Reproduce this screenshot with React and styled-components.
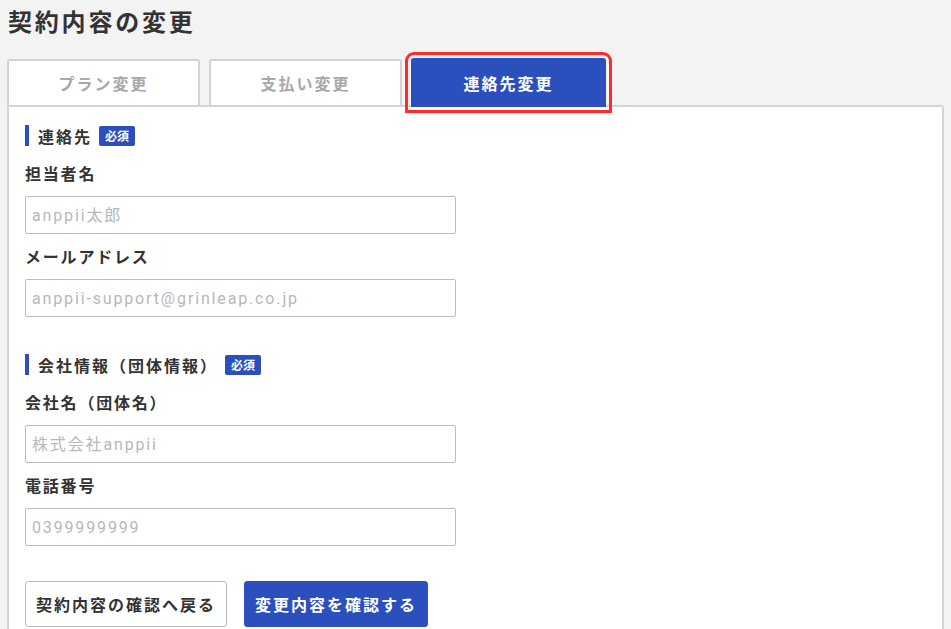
import React from "react";
import styled, { createGlobalStyle } from "styled-components";

const BLUE = "#2b50bd";
const FONT = `"Noto Sans CJK JP", "Noto Sans", sans-serif`;
const INPUT_FONT = `Roboto, "Noto Sans CJK JP", sans-serif`;

const Global = createGlobalStyle`
  html, body { margin: 0; padding: 0; background: #f3f3f3; }
  body { font-family: ${FONT}; color: #333; }
  * { box-sizing: border-box; }
`;

const Page = styled.div`
  padding: 0 7px;
`;

const Title = styled.h1`
  margin: 0;
  padding-left: 1px;
  font-size: 24px;
  line-height: 42px;
  font-weight: 700;
  letter-spacing: 2.8px;
  color: #333;
`;

const Tabs = styled.div`
  display: flex;
  gap: 9px;
  margin-top: 16px;
  align-items: flex-end;
  position: relative;
  z-index: 1;
`;

const Tab = styled.button`
  width: ${(p) => (p.$active ? "195px" : "193px")};
  height: ${(p) => (p.$active ? "49px" : "46px")};
  margin-bottom: ${(p) => (p.$active ? "-2px" : "0")};
  border: ${(p) => (p.$active ? "none" : "2px solid #d2d2d2")};
  border-bottom: none;
  border-radius: 3px 3px 0 0;
  background: ${(p) => (p.$active ? BLUE : "#fff")};
  color: ${(p) => (p.$active ? "#fff" : "#a8a8a8")};
  font-family: ${FONT};
  font-size: 16px;
  font-weight: 700;
  letter-spacing: 2px;
  padding: 0;
  cursor: pointer;
  outline: ${(p) => (p.$highlight ? "3px solid #ff2b2b" : "none")};
  outline-offset: 3px;
`;

const Panel = styled.div`
  background: #fff;
  border: 2px solid #d4d4d4;
  border-radius: 0 3px 0 0;
  padding: 18px 16px 40px;
`;

const Section = styled.section`
  & + & {
    margin-top: 37px;
  }
`;

const SectionHead = styled.div`
  display: flex;
  align-items: center;
  height: 21px;
  border-left: 4px solid ${BLUE};
  padding-left: 9px;
  font-size: 16px;
  font-weight: 700;
  letter-spacing: 2px;
  color: #333;
  margin-bottom: 15px;
`;

const Badge = styled.span`
  display: inline-flex;
  align-items: center;
  justify-content: center;
  width: 36px;
  height: 20px;
  margin-left: 7px;
  background: ${BLUE};
  color: #fff;
  font-size: 12px;
  font-weight: 700;
  letter-spacing: 0;
  border-radius: 2px;
`;

const Field = styled.div`
  & + & {
    margin-top: 10px;
  }
`;

const Label = styled.label`
  display: block;
  font-size: 16px;
  line-height: 24px;
  font-weight: 700;
  letter-spacing: 1.8px;
  color: #333;
  margin-bottom: 11px;
`;

const Input = styled.input`
  display: block;
  width: 431px;
  height: 38px;
  border: 1px solid #bdbdbd;
  border-radius: 2px;
  padding: 0 6px;
  font-family: ${INPUT_FONT};
  font-size: 16px;
  letter-spacing: 1.85px;
  color: #333;
  background: #fff;
  &::placeholder {
    color: #b8b8b8;
  }
`;

const Actions = styled.div`
  display: flex;
  gap: 17px;
  margin-top: 35px;
`;

const Button = styled.button`
  height: 46px;
  padding: 0 10px;
  border: 1px solid ${(p) => (p.$primary ? BLUE : "#bdbdbd")};
  border-radius: 3px;
  background: ${(p) => (p.$primary ? BLUE : "#fff")};
  color: ${(p) => (p.$primary ? "#fff" : "#333")};
  font-family: ${FONT};
  font-size: 16px;
  font-weight: 700;
  letter-spacing: 2px;
  cursor: pointer;
`;

export default function App() {
  return (
    <>
      <Global />
      <Page>
        <Title>契約内容の変更</Title>
        <Tabs>
          <Tab>プラン変更</Tab>
          <Tab>支払い変更</Tab>
          <Tab $active $highlight>連絡先変更</Tab>
        </Tabs>
        <Panel>
          <Section>
            <SectionHead>
              連絡先<Badge>必須</Badge>
            </SectionHead>
            <Field>
              <Label>担当者名</Label>
              <Input placeholder="anppii太郎" />
            </Field>
            <Field>
              <Label>メールアドレス</Label>
              <Input placeholder="anppii-support@grinleap.co.jp" />
            </Field>
          </Section>
          <Section>
            <SectionHead>
              会社情報（団体情報）<Badge>必須</Badge>
            </SectionHead>
            <Field>
              <Label>会社名（団体名）</Label>
              <Input placeholder="株式会社anppii" />
            </Field>
            <Field>
              <Label>電話番号</Label>
              <Input placeholder="0399999999" />
            </Field>
          </Section>
          <Actions>
            <Button>契約内容の確認へ戻る</Button>
            <Button $primary>変更内容を確認する</Button>
          </Actions>
        </Panel>
      </Page>
    </>
  );
}
